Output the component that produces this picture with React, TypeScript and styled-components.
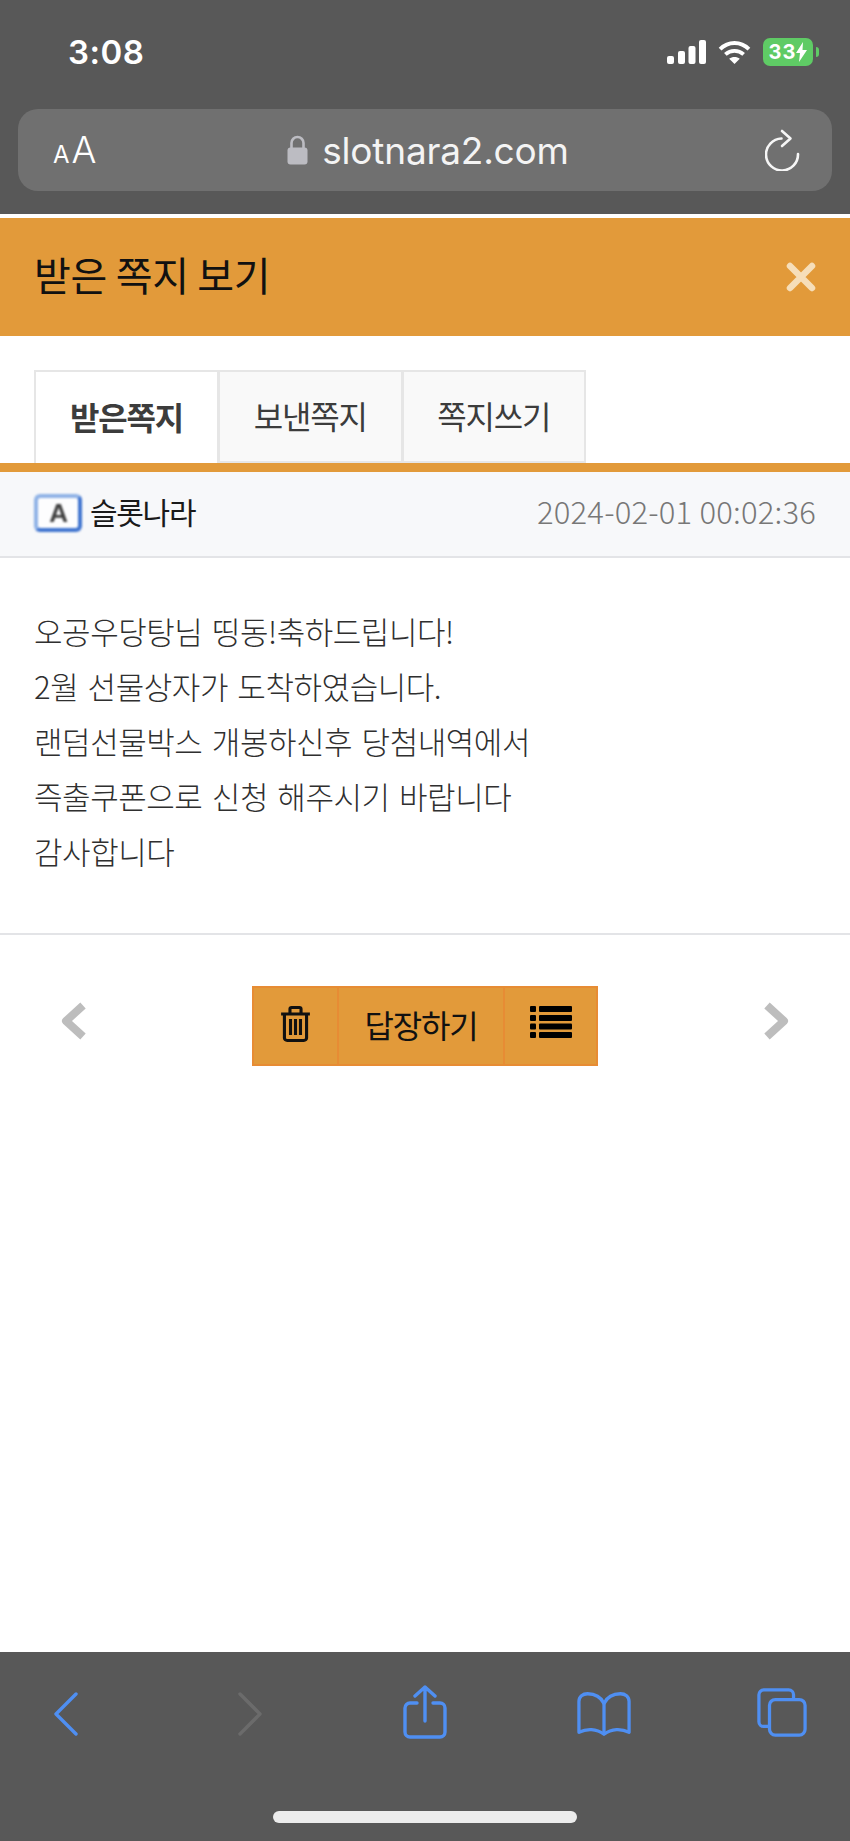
import React from "react";
import styled, { createGlobalStyle } from "styled-components";

const Global = createGlobalStyle`
  html, body { margin: 0; padding: 0; background: #fff; }
  * { box-sizing: border-box; }
  #root { width: 850px; height: 1841px; }
`;

const KR = `"Noto Sans CJK KR", "Noto Sans", sans-serif`;
const UI = `Inter, "Liberation Sans", sans-serif`;

const Page = styled.div`
  width: 850px;
  height: 1841px;
  display: flex;
  flex-direction: column;
  font-family: ${KR};
  background: #fff;
`;

const Chrome = styled.div`
  height: 214px;
  background: #585858;
  padding: 0 18px;
  flex: none;
`;

const StatusBar = styled.div`
  height: 109px;
  display: flex;
  align-items: center;
  justify-content: space-between;
  padding: 0 19px 5px 50px;
`;

const Clock = styled.span`
  font: 600 33px/1 ${UI};
  color: #fff;
  letter-spacing: 0.5px;
`;

const StatusIcons = styled.div`
  display: flex;
  align-items: center;
  gap: 12px;
`;

const Battery = styled.div`
  position: relative;
  width: 50px;
  height: 28px;
  background: #5fcb65;
  border-radius: 7px;
  color: #fff;
  font: 700 20px/28px ${UI};
  display: flex;
  justify-content: center;
  align-items: center;
  letter-spacing: 1px;
  &::after {
    content: "";
    position: absolute;
    right: -6px;
    top: 9px;
    width: 3px;
    height: 10px;
    border-radius: 0 3px 3px 0;
    background: #5fcb65;
  }
`;

const UrlBar = styled.div`
  height: 82px;
  border-radius: 20px;
  background: #707070;
  display: grid;
  grid-template-columns: 120px 1fr 120px;
  align-items: center;
  color: #fff;
`;

const AaLabel = styled.span`
  padding: 0 0 2px 35px;
  font: 300 37px/1 ${UI};
  color: #fff;
  display: flex;
  align-items: baseline;
  gap: 2px;
  small { font-size: 24px; font-weight: 400; }
`;

const Domain = styled.div`
  display: flex;
  justify-content: center;
  align-items: center;
  gap: 14px;
  padding-left: 6px;
  font: 400 37px/1 ${UI};
  letter-spacing: -0.2px;
  color: #f4f4f4;
`;

const Reload = styled.div`
  justify-self: end;
  padding-right: 31px;
  display: flex;
`;

const Divider = styled.div`
  height: 4px;
  background: #fff;
  flex: none;
`;

const Header = styled.div`
  height: 118px;
  background: #e29a3a;
  display: flex;
  align-items: center;
  justify-content: space-between;
  padding: 0 34px;
  flex: none;
`;

const Title = styled.h1`
  margin: 0 0 6px;
  font: 400 40px/1 ${KR};
  color: #111;
  letter-spacing: -0.3px;
`;

const Close = styled.div`
  display: flex;
`;

const Tabs = styled.div`
  display: flex;
  padding: 34px 0 0 34px;
  border-bottom: 9px solid #e29a3a;
  flex: none;
  height: 136px;
`;

const Tab = styled.div<{ $active?: boolean }>`
  width: 184.5px;
  margin-left: -1px;
  height: 93px;
  display: flex;
  align-items: center;
  justify-content: center;
  padding-bottom: 4px;
  border: 2px solid #e6e6e6;
  border-bottom: ${(p) => (p.$active ? "none" : "2px solid #e6e6e6")};
  background: ${(p) => (p.$active ? "#fff" : "#f9f9f9")};
  font: ${(p) => (p.$active ? 700 : 400)} 32px/1 ${KR};
  letter-spacing: -1.2px;
  color: #3c3c3c;
  &:first-child { margin-left: 0; width: 185px; }
`;

const Meta = styled.div`
  height: 86px;
  background: #f7f8fa;
  border-bottom: 2px solid #e3e4e7;
  display: flex;
  align-items: center;
  justify-content: space-between;
  padding: 0 34px 2px;
  flex: none;
`;

const Sender = styled.div`
  display: flex;
  align-items: center;
  gap: 8px;
  font: 400 30px/1 ${KR};
  letter-spacing: -1.3px;
  color: #1a1a1a;
`;

const SenderName = styled.span`
  padding-bottom: 4px;
`;

const Avatar = styled.div`
  width: 48px;
  height: 38px;
  border-radius: 6px;
  background: #fdfdfe;
  border: 4px solid #8fb2e6;
  border-right-color: #3f74cf;
  border-bottom-color: #3f74cf;
  display: flex;
  align-items: center;
  justify-content: center;
  font: 700 26px/1 "Liberation Sans", sans-serif;
  color: #3d3d3d;
  overflow: hidden;
  filter: blur(0.9px);
`;

const Stamp = styled.time`
  font: 300 31px/1 ${KR};
  letter-spacing: 0.2px;
  color: #777;
  padding-bottom: 5px;
`;

const Body = styled.div`
  padding: 45px 34px 0;
  border-bottom: 2px solid #e3e4e7;
  font: 300 31px/55px ${KR};
  letter-spacing: -0.45px;
  word-spacing: 3px;
  color: #2f2f2f;
  height: 377px;
  flex: none;
  p { margin: 0; white-space: nowrap; }
`;

const Pager = styled.div`
  display: flex;
  align-items: center;
  justify-content: space-between;
  padding: 51px 60px 0;
  flex: none;
`;

const Chevron = styled.div`
  display: flex;
  padding-bottom: 10px;
`;

const ButtonGroup = styled.div`
  display: flex;
  height: 80px;
  border: 2px solid #e78c34;
  background: #e29a3a;
`;

const GroupButton = styled.div<{ $w: number; $lift?: number }>`
  width: ${(p) => p.$w}px;
  display: flex;
  align-items: center;
  justify-content: center;
  font: 400 32px/1 ${KR};
  letter-spacing: -1.2px;
  color: #111;
  border-left: 2px solid #e78c34;
  padding-bottom: ${(p) => p.$lift ?? 5}px;
  &:first-child { border-left: none; }
`;

const Spacer = styled.div`
  flex: 1;
`;

const BottomBar = styled.div`
  height: 189px;
  background: #585858;
  position: relative;
  padding: 33px 0 0 54px;
  flex: none;
`;

const BottomIcons = styled.div`
  display: grid;
  grid-template-columns: 184px 165px 174px 180px auto;
  align-items: start;
`;

const BottomSlot = styled.div<{ $mt: number }>`
  display: flex;
  margin-top: ${(p) => p.$mt}px;
`;

const Home = styled.div`
  position: absolute;
  left: 273px;
  bottom: 18px;
  width: 304px;
  height: 12px;
  border-radius: 6px;
  background: #ececec;
`;

export default function App() {
  return (
    <Page>
      <Global />
      <Chrome>
        <StatusBar>
          <Clock>3:08</Clock>
          <StatusIcons>
            <svg width="39" height="24" viewBox="0 0 39 24" fill="#fff">
              <rect x="0" y="16" width="7" height="8" rx="2" />
              <rect x="11" y="11" width="7" height="13" rx="2" />
              <rect x="21.5" y="6" width="7" height="18" rx="2" />
              <rect x="32" y="0" width="7" height="24" rx="2" />
            </svg>
            <svg width="33" height="25" viewBox="0 0 34 26" fill="none" stroke="#fff" strokeWidth="4">
              <path d="M2 9.5C10.5 1 23.5 1 32 9.5" />
              <path d="M7.5 15C13 10 21 10 26.5 15" />
              <path d="M17 25l-5.5-5.5c3-2.500 8-2.500 11 0z" fill="#fff" stroke="none" />
            </svg>
            <Battery>
              33
              <svg width="11" height="20" viewBox="0 0 11 20" fill="#fff">
                <path d="M7 0 0 11h4l-1 9 8-12H6.500z" />
              </svg>
            </Battery>
          </StatusIcons>
        </StatusBar>
        <UrlBar>
          <AaLabel>
            <small>A</small>A
          </AaLabel>
          <Domain>
            <svg width="21" height="30" viewBox="0 0 21 30" fill="none">
              <path d="M4.500 14V8a6 6 0 0 1 12 0v6" stroke="#bcbcc2" strokeWidth="2.600" />
              <rect x="0.500" y="12.500" width="20" height="17" rx="3" fill="#bcbcc2" />
            </svg>
            slotnara2.com
          </Domain>
          <Reload>
            <svg width="36" height="42" viewBox="0 0 36 42" fill="none" stroke="#f6f6f6" strokeWidth="2.600" strokeLinecap="round" strokeLinejoin="round">
              <path d="M16.500 9.500A16 16 0 1 0 33 25" />
              <path d="M17 2l8.500 7.500L17 17" />
            </svg>
          </Reload>
        </UrlBar>
      </Chrome>
      <Divider />
      <Header>
        <Title>받은 쪽지 보기</Title>
        <Close>
          <svg width="30" height="30" viewBox="0 0 30 30" stroke="#f6deb9" strokeWidth="6.500" strokeLinecap="round">
            <path d="M4 4l22 22M26 4L4 26" />
          </svg>
        </Close>
      </Header>
      <Tabs>
        <Tab $active>받은쪽지</Tab>
        <Tab>보낸쪽지</Tab>
        <Tab>쪽지쓰기</Tab>
      </Tabs>
      <Meta>
        <Sender>
          <Avatar>A</Avatar>
          <SenderName>슬롯나라</SenderName>
        </Sender>
        <Stamp>2024-02-01 00:02:36</Stamp>
      </Meta>
      <Body>
        <p>오공우당탕님 띵동!축하드립니다!</p>
        <p>2월 선물상자가 도착하였습니다.</p>
        <p>랜덤선물박스 개봉하신후 당첨내역에서</p>
        <p>즉출쿠폰으로 신청 해주시기 바랍니다</p>
        <p>감사합니다</p>
      </Body>
      <Pager>
        <Chevron>
          <svg width="28" height="38" viewBox="0 0 28 38" fill="none" stroke="#bdbdbd" strokeWidth="8" strokeLinejoin="round">
            <path d="M23 3.500 6 19l17 15.500" />
          </svg>
        </Chevron>
        <ButtonGroup>
          <GroupButton $w={83} $lift={4}>
            <svg width="31" height="36" viewBox="0 0 28 36" fill="none" stroke="#111" strokeWidth="2.800" preserveAspectRatio="none">
              <path d="M1 8h26M9 7V3a1.500 1.500 0 0 1 1.500-1.500h7A1.500 1.500 0 0 1 19 3v4" />
              <path d="M4 8v24a2.500 2.500 0 0 0 2.500 2.500h15A2.500 2.500 0 0 0 24 32V8" />
              <path d="M9.500 13v16M14 13v16M18.500 13v16" />
            </svg>
          </GroupButton>
          <GroupButton $w={166}>답장하기</GroupButton>
          <GroupButton $w={93} $lift={9}>
            <svg width="42" height="34" viewBox="0 0 42 34" fill="#000">
              <rect x="0" y="1" width="6" height="6" rx="1" />
              <rect x="9" y="1" width="33" height="6" rx="1" />
              <rect x="0" y="10" width="6" height="6" rx="1" />
              <rect x="9" y="10" width="33" height="6" rx="1" />
              <rect x="0" y="18.500" width="6" height="6" rx="1" />
              <rect x="9" y="18.500" width="33" height="6" rx="1" />
              <rect x="0" y="27" width="6" height="6" rx="1" />
              <rect x="9" y="27" width="33" height="6" rx="1" />
            </svg>
          </GroupButton>
        </ButtonGroup>
        <Chevron>
          <svg width="28" height="38" viewBox="0 0 28 38" fill="none" stroke="#bdbdbd" strokeWidth="8" strokeLinejoin="round">
            <path d="M5 3.500 22 19 5 34.500" />
          </svg>
        </Chevron>
      </Pager>
      <Spacer />
      <BottomBar>
        <BottomIcons>
          <BottomSlot $mt={7}>
            <svg width="24" height="44" viewBox="0 0 24 44" fill="none" stroke="#4f8ff2" strokeWidth="3.400" strokeLinecap="round" strokeLinejoin="round">
              <path d="M22 2 2 22l20 20" />
            </svg>
          </BottomSlot>
          <BottomSlot $mt={7}>
            <svg width="24" height="44" viewBox="0 0 24 44" fill="none" stroke="#6b6b6b" strokeWidth="3.400" strokeLinecap="round" strokeLinejoin="round">
              <path d="M2 2l20 20L2 42" />
            </svg>
          </BottomSlot>
          <BottomSlot $mt={0}>
            <svg width="44" height="54" viewBox="0 0 44 54" fill="none" stroke="#4f8ff2" strokeWidth="3.400" strokeLinecap="round" strokeLinejoin="round">
              <path d="M22 36V2M12 11l10-9 10 9" />
              <path d="M14 18H7a5 5 0 0 0-5 5v24a5 5 0 0 0 5 5h30a5 5 0 0 0 5-5V23a5 5 0 0 0-5-5h-7" />
            </svg>
          </BottomSlot>
          <BottomSlot $mt={6}>
            <svg width="54" height="46" viewBox="0 0 56 46" fill="none" stroke="#4f8ff2" strokeWidth="3.400" strokeLinecap="round" strokeLinejoin="round">
              <path d="M28 12C24 4 18 2 11 2 6 2 2 5 2 10v32c8-4 18-4 26 2 8-6 18-6 26-2V10c0-5-4-8-9-8-7 0-13 2-17 10z" />
              <path d="M28 12v31" />
            </svg>
          </BottomSlot>
          <BottomSlot $mt={3}>
            <svg width="50" height="50" viewBox="0 0 52 52" fill="none" stroke="#4f8ff2" strokeWidth="3.400" strokeLinejoin="round">
              <path d="M38 12V7a5 5 0 0 0-5-5H7a5 5 0 0 0-5 5v28a5 5 0 0 0 5 5h6" />
              <rect x="13" y="12" width="37" height="37" rx="6" />
            </svg>
          </BottomSlot>
        </BottomIcons>
        <Home />
      </BottomBar>
    </Page>
  );
}
